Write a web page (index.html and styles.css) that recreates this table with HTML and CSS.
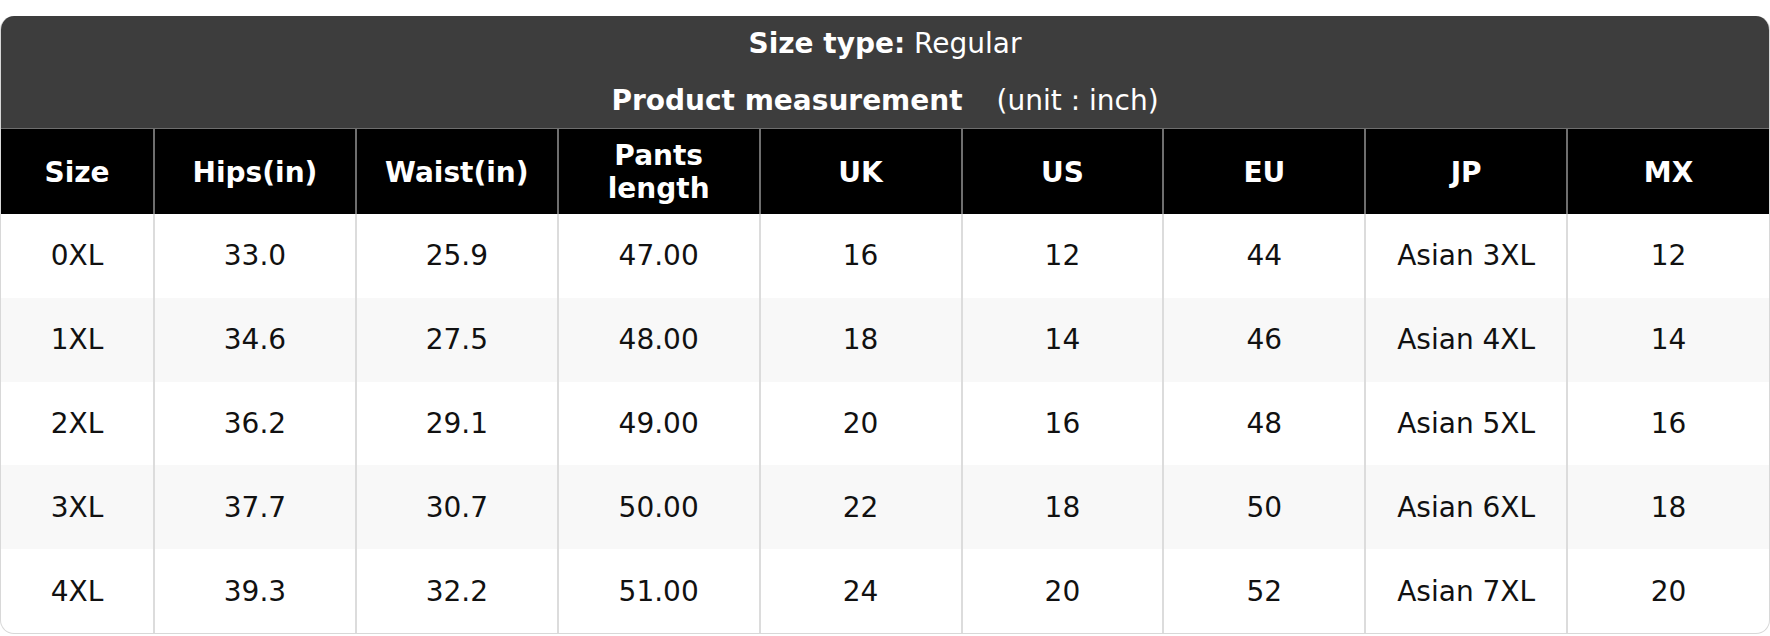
FILE: index.html
```html
<!DOCTYPE html>
<html lang="en">
<head>
<meta charset="utf-8">
<title>Size chart</title>
<link rel="stylesheet" href="styles.css">
</head>
<body>
<div class="chart">
  <div class="chart-head">
    <div class="head-line"><span class="label">Size type:</span> Regular</div>
    <div class="head-line"><span class="label">Product measurement</span><span class="unit">(unit : inch)</span></div>
  </div>
  <table class="size-table">
    <colgroup>
      <col class="col-size">
      <col><col><col><col><col><col><col><col>
    </colgroup>
    <thead>
      <tr>
        <th>Size</th><th>Hips(in)</th><th>Waist(in)</th><th>Pants<br>length</th><th>UK</th><th>US</th><th>EU</th><th>JP</th><th>MX</th>
      </tr>
    </thead>
    <tbody>
      <tr><td>0XL</td><td>33.0</td><td>25.9</td><td>47.00</td><td>16</td><td>12</td><td>44</td><td>Asian 3XL</td><td>12</td></tr>
      <tr><td>1XL</td><td>34.6</td><td>27.5</td><td>48.00</td><td>18</td><td>14</td><td>46</td><td>Asian 4XL</td><td>14</td></tr>
      <tr><td>2XL</td><td>36.2</td><td>29.1</td><td>49.00</td><td>20</td><td>16</td><td>48</td><td>Asian 5XL</td><td>16</td></tr>
      <tr><td>3XL</td><td>37.7</td><td>30.7</td><td>50.00</td><td>22</td><td>18</td><td>50</td><td>Asian 6XL</td><td>18</td></tr>
      <tr><td>4XL</td><td>39.3</td><td>32.2</td><td>51.00</td><td>24</td><td>20</td><td>52</td><td>Asian 7XL</td><td>20</td></tr>
    </tbody>
  </table>
</div>
</body>
</html>
```

FILE: styles.css
```css
html, body {
  margin: 0;
  padding: 0;
  background: #ffffff;
}

body {
  padding-top: 16px;
  font-family: "DejaVu Sans", Verdana, sans-serif;
  font-size: 28px;
  color: #111111;
}

.chart {
  width: 1768px;
  border: 1px solid #d8d8d8;
  border-top: none;
  border-radius: 14px;
  overflow: hidden;
  background: #ffffff;
}

.chart-head {
  background: #3d3d3d;
  color: #ffffff;
  text-align: center;
  padding: 11px 0 11px;
  display: flex;
  flex-direction: column;
  gap: 24px;
}

.head-line {
  line-height: normal;
}

.label {
  font-weight: bold;
}

.unit {
  margin-left: 34px;
}

.size-table {
  width: 100%;
  border-collapse: collapse;
  table-layout: fixed;
}

.col-size {
  width: 153px;
}

.size-table th {
  background: #000000;
  color: #ffffff;
  font-weight: bold;
  padding: 10px 0 9px;
  border-top: 1px solid #6e6e6e;
  border-left: 2px solid #6e6e6e;
  text-align: center;
  line-height: normal;
}

.size-table td {
  padding: 25.4px 0;
  text-align: center;
  border-left: 2px solid #dcdcdc;
  line-height: normal;
}

.size-table th:first-child,
.size-table td:first-child {
  border-left: none;
}

.size-table tbody tr:nth-child(even) td {
  background: #f8f8f8;
}
```
